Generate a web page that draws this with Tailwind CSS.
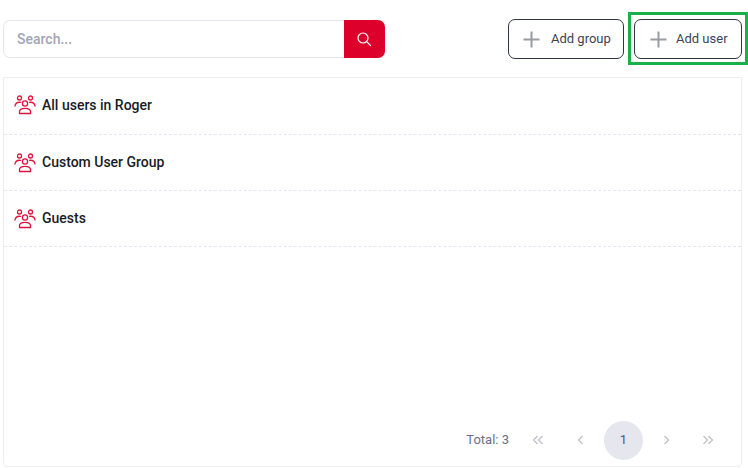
<!DOCTYPE html>
<html lang="en">
<head>
    <meta charset="UTF-8">
    <title>Users</title>
    <script src="https://cdn.jsdelivr.net/npm/@tailwindcss/browser@4"></script>
</head>
<body class="bg-white font-['Roboto',sans-serif] h-[468px] w-[748px] overflow-hidden">
    <div class="flex flex-col h-full pl-[3px] pr-[6px] pt-[19px] pb-[1px]">
        <!-- Toolbar -->
        <div class="flex items-center justify-between h-[40px]">
            <div class="flex w-[382px] h-[38px]">
                <div class="flex-1 flex items-center pl-[13px] border border-r-0 border-[#e4e6ef] rounded-l-[7px] text-[14px] font-medium text-[#a1a5b7]">Search...</div>
                <button class="w-[41px] bg-[#dc002b] rounded-r-[7px] flex items-center justify-center">
                    <svg class="w-[15px] h-[15px]" viewBox="0 0 15 15" fill="none" stroke="white" stroke-width="1.2" stroke-linecap="round"><circle cx="6" cy="6" r="5"/><path d="M9.700 9.700 L13.500 13.500"/></svg>
                </button>
            </div>
            <div class="flex gap-[10px]">
                <button class="flex items-center w-[116px] h-[40px] pl-[14px] border border-[#2f3345] rounded-[7px] text-[13px] text-[#3f4254]">
                    <svg class="w-[17px] h-[17px] mr-[11px]" viewBox="0 0 17 17" fill="none" stroke="#9a9ca3" stroke-width="2"><path d="M8.500 0.500 V16.500 M0.500 8.500 H16.500"/></svg>
                    Add group
                </button>
                <div class="relative">
                    <button class="flex items-center w-[108px] h-[40px] pl-[15px] border border-[#2f3345] rounded-[7px] text-[13px] text-[#3f4254]">
                        <svg class="w-[17px] h-[17px] mr-[9px]" viewBox="0 0 17 17" fill="none" stroke="#9a9ca3" stroke-width="2"><path d="M8.500 0.500 V16.500 M0.500 8.500 H16.500"/></svg>
                        Add user
                    </button>
                    <!-- highlight -->
                    <div class="absolute top-[-7px] left-[-6px] w-[120px] h-[53px] border-[3px] border-[#1cb04b]"></div>
                </div>
            </div>
        </div>

        <!-- Group list -->
        <div class="mt-[18px] flex-1 flex flex-col border border-[#ebedf3] rounded-b-[4px]">
            <div class="flex items-center h-[57px] pl-[10px] pb-[2px] border-b border-dashed border-[#e4e6ef] text-[14px] font-medium text-[#181c25]">
                <svg class="w-[22px] h-[20px] mr-[6px]" viewBox="0 0 22 20" fill="none" stroke="#e0133c" stroke-width="1.300" stroke-linecap="round"><circle cx="5.500" cy="3" r="2"/><circle cx="16.500" cy="3" r="2"/><circle cx="11" cy="8.500" r="2.600"/><path d="M1 11 C1.500 8 3.500 7 6.500 7.300 M21 11 C20.500 8 18.500 7 15.500 7.300"/><path d="M5.500 18.500 V16.500 C5.500 14 7.500 13.300 11 13.300 C14.500 13.300 16.500 14 16.500 16.500 V18.500 Z"/></svg>
                All users in Roger
            </div>
            <div class="flex items-center h-[56px] pl-[10px] border-b border-dashed border-[#e4e6ef] text-[14px] font-medium text-[#181c25]">
                <svg class="w-[22px] h-[20px] mr-[6px]" viewBox="0 0 22 20" fill="none" stroke="#e0133c" stroke-width="1.300" stroke-linecap="round"><circle cx="5.500" cy="3" r="2"/><circle cx="16.500" cy="3" r="2"/><circle cx="11" cy="8.500" r="2.600"/><path d="M1 11 C1.500 8 3.500 7 6.500 7.300 M21 11 C20.500 8 18.500 7 15.500 7.300"/><path d="M5.500 18.500 V16.500 C5.500 14 7.500 13.300 11 13.300 C14.500 13.300 16.500 14 16.500 16.500 V18.500 Z"/></svg>
                Custom User Group
            </div>
            <div class="flex items-center h-[56px] pl-[10px] border-b border-dashed border-[#e4e6ef] text-[14px] font-medium text-[#181c25]">
                <svg class="w-[22px] h-[20px] mr-[6px]" viewBox="0 0 22 20" fill="none" stroke="#e0133c" stroke-width="1.300" stroke-linecap="round"><circle cx="5.500" cy="3" r="2"/><circle cx="16.500" cy="3" r="2"/><circle cx="11" cy="8.500" r="2.600"/><path d="M1 11 C1.500 8 3.500 7 6.500 7.300 M21 11 C20.500 8 18.500 7 15.500 7.300"/><path d="M5.500 18.500 V16.500 C5.500 14 7.500 13.300 11 13.300 C14.500 13.300 16.500 14 16.500 16.500 V18.500 Z"/></svg>
                Guests
            </div>

            <!-- Pagination -->
            <div class="mt-auto mb-[6px] flex items-center justify-end pr-[13px] text-[13px]">
                <span class="mr-[9px] text-[#6c7080]">Total: 3</span>
                <span class="w-[40px] h-[40px] flex items-center justify-center">
                    <svg class="w-[12px] h-[10px]" viewBox="0 0 12 10" fill="none" stroke="#c0c2ca" stroke-width="1.300"><path d="M5.500 1 L1.500 5 L5.500 9 M10.500 1 L6.500 5 L10.500 9"/></svg>
                </span>
                <span class="ml-[2px] w-[40px] h-[40px] flex items-center justify-center">
                    <svg class="w-[7px] h-[10px]" viewBox="0 0 7 10" fill="none" stroke="#c0c2ca" stroke-width="1.300"><path d="M5.500 1 L1.500 5 L5.500 9"/></svg>
                </span>
                <span class="ml-[4px] w-[39px] h-[39px] rounded-full bg-[#e6e7ee] flex items-center justify-center text-[#3f5a80]">1</span>
                <span class="ml-[3px] w-[40px] h-[40px] flex items-center justify-center">
                    <svg class="w-[7px] h-[10px]" viewBox="0 0 7 10" fill="none" stroke="#c0c2ca" stroke-width="1.300"><path d="M1.500 1 L5.500 5 L1.500 9"/></svg>
                </span>
                <span class="ml-[2px] w-[40px] h-[40px] flex items-center justify-center">
                    <svg class="w-[12px] h-[10px]" viewBox="0 0 12 10" fill="none" stroke="#c0c2ca" stroke-width="1.300"><path d="M1.500 1 L5.500 5 L1.500 9 M6.500 1 L10.500 5 L6.500 9"/></svg>
                </span>
            </div>
        </div>
    </div>
</body>
</html>
